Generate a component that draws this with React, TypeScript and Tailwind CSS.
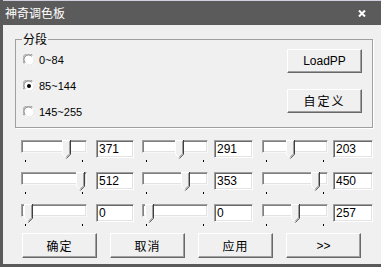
import type { ReactNode } from "react";

const LATIN = "font-['Liberation_Sans','Noto_Sans_CJK_SC',sans-serif]";
const CJK = "font-['Noto_Sans_CJK_SC','Liberation_Sans',sans-serif]";

const rows = [
  [371, 291, 203],
  [512, 353, 450],
  [0, 0, 257],
];

// margin-left of each control in a row: slider, text, slider, text, slider, text
const gaps = ["ml-[18px]", "ml-[9px]", "ml-[8px]", "ml-[6px]", "ml-[9px]", "ml-[5px]"];

function Radio({ checked }: { checked?: boolean }) {
  return (
    <svg width="12" height="12" viewBox="0 0 12 12" className="shrink-0">
      <circle cx="6" cy="6" r="5.5" fill="#ffffff" />
      <path d="M1.2 9.5 A5.5 5.5 0 0 1 9.5 1.2" fill="none" stroke="#a0a0a0" strokeWidth="1" />
      <path d="M2.2 8.8 A4.5 4.5 0 0 1 8.8 2.2" fill="none" stroke="#696969" strokeWidth="1" />
      <path d="M10.8 2.5 A5.5 5.5 0 0 1 2.5 10.8" fill="none" stroke="#f8f8f8" strokeWidth="1" />
      <path d="M9.8 3.2 A4.5 4.5 0 0 1 3.2 9.8" fill="none" stroke="#e3e3e3" strokeWidth="1" />
      {checked && <circle cx="6" cy="6" r="2" fill="#000000" />}
    </svg>
  );
}

function Btn({ children, className = "" }: { children: ReactNode; className?: string }) {
  return (
    <div
      className={`flex h-[24px] w-[75px] items-center justify-center border border-t-white border-l-white border-r-[#696969] border-b-[#696969] bg-[#f0f0f0] text-[12px] text-black shadow-[inset_-1px_-1px_0_#a0a0a0] ${className}`}
    >
      {children}
    </div>
  );
}

function Slider({ value, className = "" }: { value: number; className?: string }) {
  const left = 3 + Math.round((value / 512) * 52);
  return (
    <div className={`relative h-[18px] w-[66px] shrink-0 ${className}`}>
      <div className="h-[13px] border border-t-[#a0a0a0] border-l-[#a0a0a0] border-r-[#f8f8f8] border-b-[#f8f8f8] bg-white shadow-[inset_1px_1px_0_#808080,inset_-1px_-1px_0_#e3e3e3]" />
      <div className="mt-[7px] flex justify-between px-[4px]">
        <div className="h-[2px] w-[1px] bg-black" />
        <div className="h-[2px] w-[1px] bg-black" />
      </div>
      <svg width="9" height="19" viewBox="0 0 9 19" className="absolute top-0" style={{ left }}>
        <polygon points="0,0 8,0 8,14 4,18 0,14" fill="#f0f0f0" />
        <polyline points="0.5,14 0.5,0.5 7.5,0.5" fill="none" stroke="#ffffff" strokeWidth="1" />
        <polyline points="8.5,0 8.5,14.2 4.3,18.5" fill="none" stroke="#404040" strokeWidth="1" />
        <polyline points="7.5,1 7.5,13.8 4,17.3" fill="none" stroke="#a0a0a0" strokeWidth="1" />
        <line x1="0.5" y1="14" x2="4" y2="17.5" stroke="#ffffff" strokeWidth="1" />
      </svg>
    </div>
  );
}

function Field({ value, className = "" }: { value: number; className?: string }) {
  return (
    <div
      className={`flex h-[18px] shrink-0 items-center border border-t-[#a0a0a0] border-l-[#a0a0a0] border-r-white border-b-white bg-white pl-[2px] text-[12px] leading-none text-black shadow-[inset_1px_1px_0_#696969,inset_-1px_-1px_0_#e3e3e3] ${LATIN} ${className}`}
    >
      {value}
    </div>
  );
}

export default function App() {
  return (
    <div className={`flex h-[267px] w-[381px] flex-col border-b-[3px] border-l-[3px] border-[#5a5a5a] bg-[#f0f0f0] ${CJK}`}>
      {/* Title bar */}
      <div className="flex h-[25px] shrink-0 items-center justify-between border-t border-t-[#cfcfe0] bg-[#5b5b5b] pl-[2px] pr-[15px]">
        <span className="text-[12px] text-white">神奇调色板</span>
        <svg width="8" height="7" viewBox="0 0 8 7">
          <path d="M1 0.5 L7 6.5 M7 0.5 L1 6.5" stroke="#ffffff" strokeWidth="2" />
        </svg>
      </div>

      {/* Group box */}
      <div className="relative ml-[12px] mt-[14px] flex h-[89px] w-[358px] shrink-0 justify-between border border-[#a0a0a0] shadow-[1px_1px_0_#ffffff]">
        <span className="absolute -top-[9px] left-[6px] bg-[#f0f0f0] px-[1px] text-[12px] leading-[16px] text-black">分段</span>
        <div className={`ml-[7px] mt-[14px] flex flex-col gap-[14px] text-[11px] leading-[12px] text-black ${LATIN}`}>
          <div className="flex items-center gap-[4px]">
            <Radio />
            <span>0~84</span>
          </div>
          <div className="flex items-center gap-[4px]">
            <Radio checked />
            <span>85~144</span>
          </div>
          <div className="flex items-center gap-[4px]">
            <Radio />
            <span>145~255</span>
          </div>
        </div>
        <div className="mr-[10px] mt-[9px] flex flex-col gap-[16px]">
          <Btn className={LATIN}>LoadPP</Btn>
          <Btn className="tracking-[2px]">自定义</Btn>
        </div>
      </div>

      {/* Sliders */}
      <div className="mt-[12px] flex flex-col gap-[14px]">
        {rows.map((row, i) => (
          <div key={i} className="flex items-start">
            <Slider value={row[0]} className={gaps[0]} />
            <Field value={row[0]} className={`w-[38px] ${gaps[1]}`} />
            <Slider value={row[1]} className={gaps[2]} />
            <Field value={row[1]} className={`w-[39px] ${gaps[3]}`} />
            <Slider value={row[2]} className={gaps[4]} />
            <Field value={row[2]} className={`w-[40px] ${gaps[5]}`} />
          </div>
        ))}
      </div>

      {/* Bottom buttons */}
      <div className="ml-[19px] mt-[11px] flex gap-[13px]">
        <Btn className="h-[25px] tracking-[1px]">确定</Btn>
        <Btn className="h-[25px] tracking-[1px]">取消</Btn>
        <Btn className="h-[25px] tracking-[1px]">应用</Btn>
        <Btn className={`h-[25px] text-[10px] ${LATIN}`}>&gt;&gt;</Btn>
      </div>
    </div>
  );
}
